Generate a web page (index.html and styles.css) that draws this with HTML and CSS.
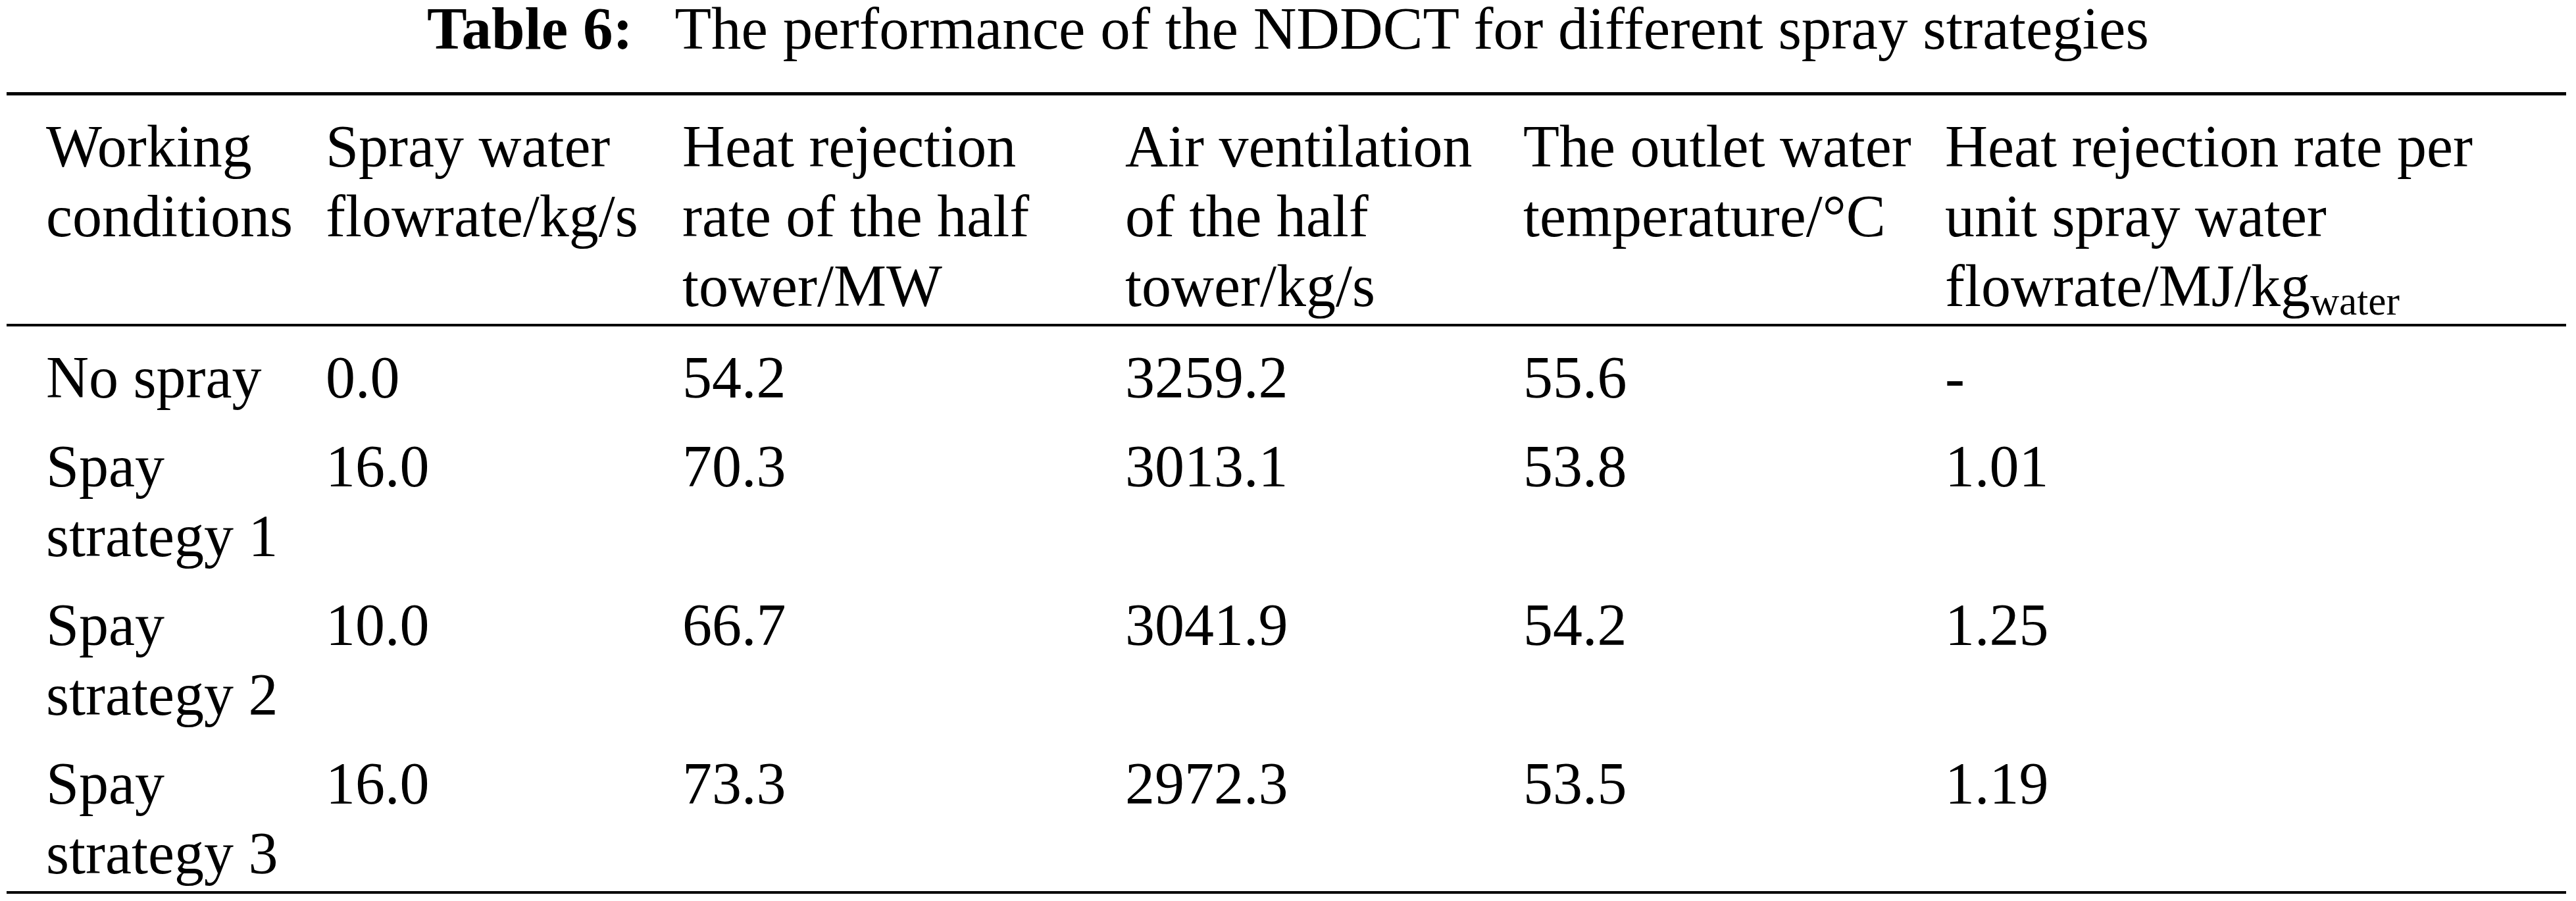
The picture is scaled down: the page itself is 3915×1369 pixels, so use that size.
FILE: index.html
```html
<!DOCTYPE html>
<html lang="en">
<head>
<meta charset="utf-8">
<title>Table 6</title>
<link rel="stylesheet" href="styles.css">
</head>
<body>
<div class="page">
  <p class="caption"><span class="label">Table 6:</span>The performance of the NDDCT for different spray strategies</p>
  <table class="data">
    <colgroup>
      <col class="c1"><col class="c2"><col class="c3"><col class="c4"><col class="c5"><col class="c6">
    </colgroup>
    <thead>
      <tr>
        <th>Working conditions</th>
        <th>Spray water flowrate/kg/s</th>
        <th>Heat rejection rate of the half tower/MW</th>
        <th>Air ventilation of the half tower/kg/s</th>
        <th>The outlet water temperature/°C</th>
        <th>Heat rejection rate per unit spray water flowrate/MJ/kg<span class="sub">water</span></th>
      </tr>
    </thead>
    <tbody>
      <tr>
        <td>No spray</td><td>0.0</td><td>54.2</td><td>3259.2</td><td>55.6</td><td>-</td>
      </tr>
      <tr>
        <td>Spay strategy 1</td><td>16.0</td><td>70.3</td><td>3013.1</td><td>53.8</td><td>1.01</td>
      </tr>
      <tr>
        <td>Spay strategy 2</td><td>10.0</td><td>66.7</td><td>3041.9</td><td>54.2</td><td>1.25</td>
      </tr>
      <tr class="last">
        <td>Spay strategy 3</td><td>16.0</td><td>73.3</td><td>2972.3</td><td>53.5</td><td>1.19</td>
      </tr>
    </tbody>
  </table>
</div>
</body>
</html>
```
FILE: styles.css
```css
html, body {
  margin: 0;
  padding: 0;
  background: #ffffff;
}

body {
  font-family: "Liberation Serif", "Times New Roman", serif;
  color: #000000;
}

.page {
  width: 3915px;
}

.caption {
  margin: 0;
  font-size: 91px;
  line-height: 88px;
  text-align: center;
}

.caption .label {
  font-weight: bold;
  margin-right: 0.7em;
}

.data {
  margin: 52px 0 0 10px;
  width: 3890px;
  table-layout: fixed;
  border-collapse: separate;
  border-spacing: 0;
  font-size: 90px;
  line-height: 106px;
}

.c1 { width: 485px; }
.c2 { width: 542px; }
.c3 { width: 673px; }
.c4 { width: 605px; }
.c5 { width: 641px; }
.c6 { width: 944px; }

.data th,
.data td {
  text-align: left;
  vertical-align: top;
  font-weight: normal;
  padding: 25px 30px 4px 0;
}

.data th:first-child,
.data td:first-child {
  padding-left: 60px;
}

.data thead th {
  border-top: 5px solid #000;
  border-bottom: 4px solid #000;
}

.data tr.last td {
  border-bottom: 4px solid #000;
}

.sub {
  font-size: 0.68em;
  vertical-align: -0.22em;
  line-height: 0;
}
```
